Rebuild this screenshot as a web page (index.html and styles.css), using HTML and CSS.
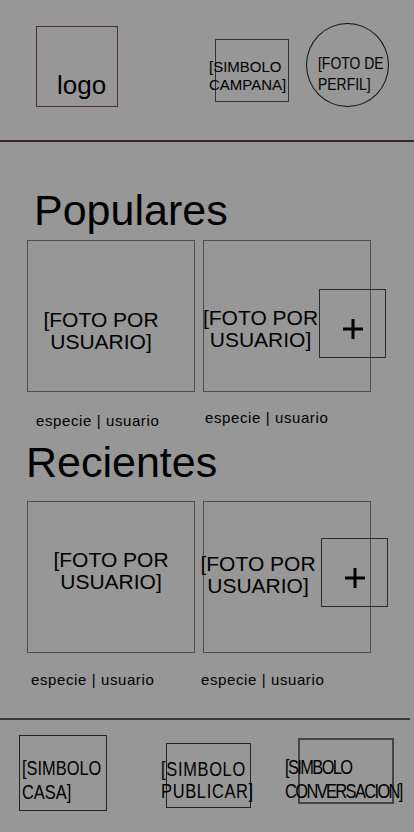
FILE: index.html
```html
<!DOCTYPE html>
<html lang="es">
<head>
  <meta charset="UTF-8">
  <meta name="viewport" content="width=device-width, initial-scale=1.0">
  <title>Inicio</title>
  <link rel="stylesheet" href="styles.css">
</head>

<body>
  <header class="topbar">
    <div class="logo">logo</div>
    <div class="bell"><span class="bell-text">[SIMBOLO<br>CAMPANA]</span></div>
    <div class="avatar"><span class="avatar-text">[FOTO DE<br>PERFIL]</span></div>
  </header>

  <main>
    <section class="feed feed-popular">
      <h2 class="feed-title">Populares</h2>
      <div class="shots">
        <div class="shot shot-a">
          <div class="photo"><span class="photo-text">[FOTO POR<br>USUARIO]</span></div>
          <p class="caption">especie | usuario</p>
        </div>
        <div class="shot shot-b">
          <div class="photo">
            <span class="photo-text">[FOTO POR<br>USUARIO]</span>
            <button class="add">
              <svg width="22" height="22" viewBox="0 0 22 22"><path d="M11 1v20M1 11h20" stroke="#000" stroke-width="3" fill="none"/></svg>
            </button>
          </div>
          <p class="caption">especie | usuario</p>
        </div>
      </div>
    </section>

    <section class="feed feed-recent">
      <h2 class="feed-title">Recientes</h2>
      <div class="shots">
        <div class="shot shot-c">
          <div class="photo"><span class="photo-text">[FOTO POR<br>USUARIO]</span></div>
          <p class="caption">especie | usuario</p>
        </div>
        <div class="shot shot-d">
          <div class="photo">
            <span class="photo-text">[FOTO POR<br>USUARIO]</span>
            <button class="add">
              <svg width="22" height="22" viewBox="0 0 22 22"><path d="M11 1v20M1 11h20" stroke="#000" stroke-width="3" fill="none"/></svg>
            </button>
          </div>
          <p class="caption">especie | usuario</p>
        </div>
      </div>
    </section>
  </main>

  <nav class="tabbar">
    <div class="tab tab-home"><span class="tab-text">[SIMBOLO<br>CASA]</span></div>
    <div class="tab tab-post"><span class="tab-text">[SIMBOLO<br>PUBLICAR]</span></div>
    <div class="tab tab-chat"><span class="tab-text">[SIMBOLO<br>CONVERSACION]</span></div>
  </nav>
</body>

</html>
```

FILE: styles.css
```css
body {
  margin: 0;
  background-color: #979797;
  color: #000;
  font-family: "Liberation Sans", Arial, sans-serif;
}

/* narrow labels: no condensed face installed, so squeeze the regular one */
.avatar-text,
.tab-text {
  display: inline-block;
  transform: scaleX(0.82);
  transform-origin: left top;
  white-space: nowrap;
}

/* top bar */
.topbar {
  display: flex;
  align-items: flex-start;
  height: 140px;
  padding: 0 25px 0 36px;
  border-bottom: 2px solid #3a2428;
}

.logo {
  box-sizing: border-box;
  width: 82px;
  height: 81px;
  margin-top: 26px;
  padding: 45px 0 0 20px;
  border: 1px solid #4a2e30;
  font-size: 26px;
  line-height: 1;
}

.bell {
  box-sizing: border-box;
  width: 74px;
  height: 63px;
  margin-top: 39px;
  margin-left: auto;
  padding-top: 18px;
  border: 1px solid #333;
}

.bell-text {
  display: block;
  margin-left: -7px;
  font-size: 15px;
  line-height: 18px;
  white-space: nowrap;
}

.avatar {
  box-sizing: border-box;
  width: 83px;
  height: 84px;
  margin-top: 23px;
  margin-left: 17px;
  padding: 29px 0 0 11px;
  border: 1px solid #111;
  border-radius: 50%;
}

.avatar-text {
  font-size: 17px;
  line-height: 21px;
}

/* feeds */
.feed-popular {
  padding-top: 44px;
}

.feed-popular .feed-title {
  padding-left: 34px;
}

.feed-recent {
  margin-top: 9px;
}

.feed-recent .feed-title {
  padding-left: 26px;
  margin-bottom: 15px;
}

.feed-title {
  margin: 0 0 6px;
  font-size: 43px;
  font-weight: normal;
  line-height: 48px;
}

.shots {
  display: grid;
  grid-template-columns: 168px 168px;
  column-gap: 8px;
  align-items: start;
  padding-left: 27px;
}

.photo {
  position: relative;
  box-sizing: border-box;
  display: flex;
  justify-content: center;
  align-items: flex-start;
  height: 152px;
  border: 1px solid #4d4d4d;
}

.photo-text {
  font-size: 21px;
  line-height: 22px;
  text-align: center;
  white-space: nowrap;
}

.caption {
  margin: 19px 0 0;
  font-size: 15px;
  line-height: 16px;
  letter-spacing: 0.6px;
  white-space: nowrap;
}

.shot-a .photo-text { margin: 68px 20px 0 0; }
.shot-a .caption { margin: 21px 0 0 9px; }

.shot-b .photo-text { margin: 66px 53px 0 0; }
.shot-b .caption { margin: 18px 0 0 2px; }
.shot-b .add { left: 115px; top: 48px; }

.shot-c .photo-text { margin-top: 47px; }
.shot-c .caption { margin-left: 4px; }

.shot-d .photo-text { margin: 51px 58px 0 0; }
.shot-d .caption { margin-left: -2px; }
.shot-d .add { left: 117px; top: 36px; }

.add {
  position: absolute;
  box-sizing: border-box;
  display: flex;
  justify-content: center;
  align-items: center;
  width: 67px;
  height: 69px;
  padding: 10px 0 0;
  border: 1px solid #2a2a2a;
  background: transparent;
}

.add svg {
  display: block;
}

/* bottom bar */
.tabbar {
  display: flex;
  align-items: flex-start;
  margin: 30px 4px 0 0;
  padding-left: 19px;
  border-top: 2px solid #383838;
}

.tab {
  box-sizing: border-box;
  border: 1px solid #222;
}

.tab-text {
  font-size: 20px;
  line-height: 24px;
}

.tab-home {
  width: 88px;
  height: 76px;
  margin-top: 15px;
  padding: 20px 0 0 2px;
}

.tab-post {
  width: 85px;
  height: 65px;
  margin: 23px 0 0 59px;
  padding-top: 14px;
}

.tab-post .tab-text {
  margin-left: -6px;
  line-height: 22px;
  letter-spacing: 0.85px;
}

.tab-chat {
  width: 96px;
  height: 66px;
  margin: 18px 0 0 47px;
  padding-top: 15px;
  border: 2px solid #444;
}

.tab-chat .tab-text {
  margin-left: -15px;
  letter-spacing: -1.95px;
}
```
